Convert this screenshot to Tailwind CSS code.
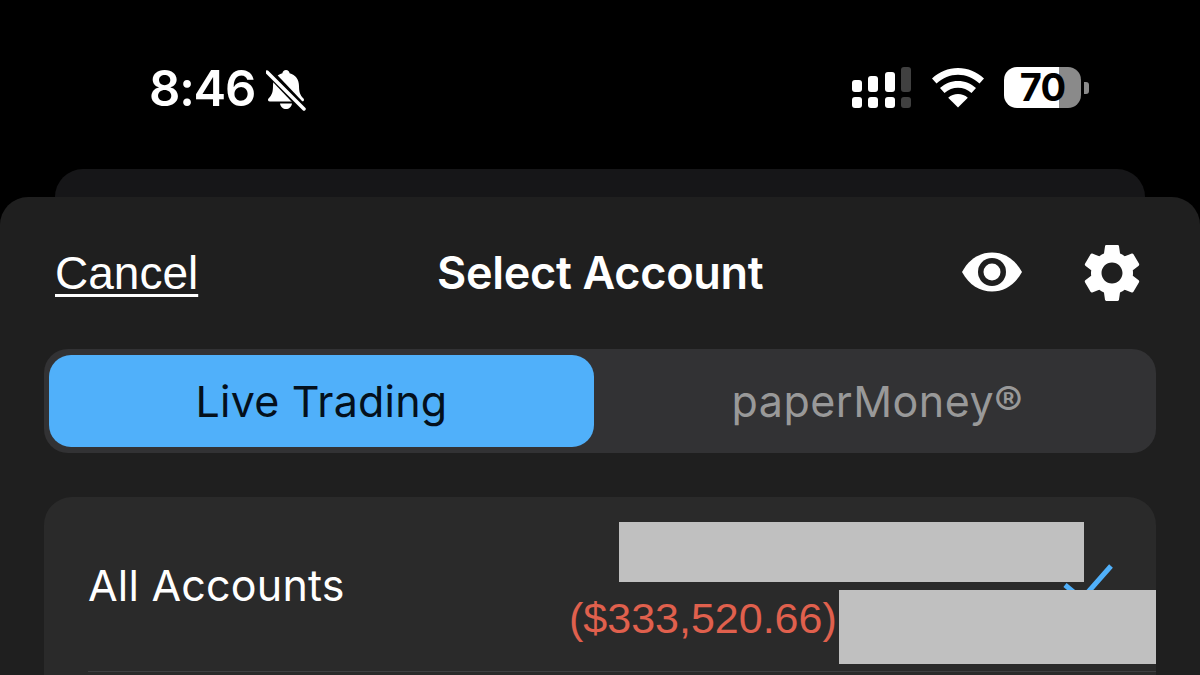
<!DOCTYPE html>
<html>
<head>
<meta charset="utf-8">
<script src="https://cdn.jsdelivr.net/npm/@tailwindcss/browser@4"></script>
</head>
<body class="bg-black">
<div class="w-[1200px] h-[675px] overflow-hidden bg-black flex flex-col font-['Inter','Liberation_Sans',sans-serif]">
  <!-- status bar -->
  <div class="h-[169px] shrink-0 pt-[66px] pl-[149px] pr-[111px] flex items-start justify-between text-white">
    <div class="flex items-start gap-[11px]">
      <span class="text-[49px] leading-[46px] font-semibold tracking-[-1.2px]">8:46</span>
      <svg class="w-[40px] h-[42px] mt-[3px]" viewBox="0 0 40 42">
        <path d="M20 1c2 0 3.400 1.400 3.600 3.200C29.500 5.800 33 10.500 33 17c0 6 1 9 4.500 12.500 1 1 .5 3-1.500 3H4c-2 0-2.600-1.800-1.500-3C6 26 7 23 7 17 7 10.500 10.500 5.800 16.400 4.200 16.600 2.400 18 1 20 1z" fill="#fff"/>
        <path d="M14 34.500h12c-.5 3.500-3 5.500-6 5.500s-5.500-2-6-5.500z" fill="#fff"/>
        <path d="M0 0L40 42" stroke="#000" stroke-width="8"/>
        <path d="M1 3L38 40" stroke="#fff" stroke-width="3.500" stroke-linecap="round"/>
      </svg>
    </div>
    <div class="flex items-start">
      <svg class="w-[60px] h-[42px] mt-[1px]" viewBox="0 0 60 42">
        <g fill="#fff">
          <rect x="1" y="13" width="10" height="12" rx="3"/>
          <rect x="17" y="9" width="10" height="16" rx="3"/>
          <rect x="34" y="5" width="10" height="20" rx="3"/>
          <rect x="1" y="30" width="10" height="11" rx="3"/>
          <rect x="17" y="30" width="10" height="11" rx="3"/>
          <rect x="34" y="30" width="10" height="11" rx="3"/>
        </g>
        <rect x="50" y="0" width="10" height="25" rx="3" fill="#404040"/>
        <rect x="50" y="30" width="10" height="11" rx="3" fill="#404040"/>
      </svg>
      <svg class="w-[52px] h-[40px] ml-[21px] mt-[2px]" viewBox="0 0 52 40">
        <path d="M26 0C16 0 7.500 3.800 0 10.500l4.500 5C11 9.800 18 6.800 26 6.800s15 3 21.500 8.700l4.500-5C44.500 3.800 36 0 26 0z" fill="#fff"/>
        <path d="M26 13c-7 0-12.800 2.500-18 7l4.500 5c4-3.300 8.500-5.200 13.500-5.200s9.500 1.900 13.500 5.200l4.500-5c-5.200-4.500-11-7-18-7z" fill="#fff"/>
        <path d="M26 26c-3.700 0-7 1.300-9.800 3.700L26 39.500l9.800-9.800C33 27.300 29.700 26 26 26z" fill="#fff"/>
      </svg>
      <div class="flex items-center ml-[20px] mt-[1px]">
        <div class="relative w-[77px] h-[41px] rounded-[13px] bg-[linear-gradient(90deg,#fff_0,#fff_71%,#8a8a8a_71%,#8a8a8a_100%)] flex items-center justify-center">
          <span class="text-[38px] leading-[41px] font-bold text-black tracking-[-0.8px] font-['Inter',sans-serif]">70</span>
        </div>
        <div class="w-[5px] h-[12px] ml-[3px] bg-[#8a8a8a] rounded-r-[3px]"></div>
      </div>
    </div>
  </div>

  <!-- card behind the sheet -->
  <div class="h-[28px] shrink-0 mx-[55px] bg-[#161618] rounded-t-[28px]"></div>

  <!-- sheet -->
  <div class="flex-1 bg-[#1f1f1f] rounded-t-[28px] px-[44px]">
    <div class="h-[152px] flex items-center justify-between relative">
      <span class="ml-[11px] text-[46px] leading-[52px] text-white underline decoration-[3px] underline-offset-[5px] font-['Liberation_Sans',sans-serif]">Cancel</span>
      <span class="absolute left-[393px] top-[50px] text-[45px] leading-[52px] font-semibold text-white tracking-[-0.3px]">Select Account</span>
      <div class="flex items-center gap-[62px] mr-[16px]">
        <svg class="w-[60px] h-[40px] mt-[-2px]" viewBox="0 0 60 40">
          <path d="M0 20C7 7 18 0.500 30 0.500S53 7 60 20C53 33 42 39.500 30 39.500S7 33 0 20z" fill="#fff"/>
          <circle cx="30" cy="20" r="14" fill="#1f1f1f"/>
          <circle cx="30" cy="20" r="8.500" fill="#fff"/>
        </svg>
        <svg class="w-[70px] h-[70px] mx-[-7px] mt-[-1px]" viewBox="0 0 24 24">
          <path fill="#fff" d="M19.14 12.94c.04-.3.06-.61.06-.94 0-.32-.02-.64-.07-.94l2.03-1.58c.18-.14.23-.41.12-.61l-1.92-3.32c-.12-.22-.37-.29-.59-.22l-2.39.96c-.5-.38-1.03-.7-1.62-.94l-.36-2.54c-.04-.24-.24-.41-.48-.41h-3.84c-.24 0-.43.17-.47.41l-.36 2.54c-.59.24-1.13.57-1.62.94l-2.39-.96c-.22-.08-.47 0-.59.22L2.74 8.870c-.12.21-.08.47.12.61l2.03 1.58c-.05.3-.09.63-.09.94s.02.64.07.94l-2.03 1.58c-.18.14-.23.41-.12.61l1.92 3.32c.12.22.37.29.59.22l2.39-.96c.5.38 1.03.7 1.62.94l.36 2.54c.05.24.24.41.48.41h3.84c.24 0 .44-.17.47-.41l.36-2.54c.59-.24 1.13-.56 1.62-.94l2.39.96c.22.08.47 0 .59-.22l1.92-3.32c.12-.22.07-.47-.12-.61l-2.01-1.58zM12 15.6c-1.98 0-3.6-1.62-3.6-3.6s1.62-3.6 3.6-3.6 3.6 1.62 3.6 3.6-1.62 3.6-3.6 3.6z"/>
        </svg>
      </div>
    </div>

    <!-- segmented control -->
    <div class="h-[104px] bg-[#323234] rounded-[24px] p-[6px] pl-[5px] flex">
      <div class="w-[545px] h-[92px] bg-[#50b0fa] rounded-[22px] flex items-center justify-center text-[43px] text-[#04101c] tracking-[0.2px]">Live Trading</div>
      <div class="flex-1 flex items-center justify-center pl-[11px] text-[43px] text-[#999999] tracking-[0.5px]">paperMoney®</div>
    </div>

    <!-- account list -->
    <div class="mt-[44px] h-[240px] bg-[#2a2a2a] rounded-[28px] relative overflow-hidden">
      <div class="h-[175px] ml-[44px] flex items-center justify-between border-b border-[#3f3f41]">
        <span class="text-[43px] leading-[50px] text-white tracking-[0.2px] mt-[1px]">All Accounts</span>
      </div>
      <span class="absolute left-[525px] top-[96px] text-[43px] leading-[50px] text-[#e0604d] font-['Liberation_Sans',sans-serif]">($333,520.66)</span>
      <svg class="absolute left-[1018px] top-[66px] w-[52px] h-[40px]" viewBox="0 0 52 40">
        <path d="M3 22L20 36L49 3" fill="none" stroke="#50b0fa" stroke-width="5"/>
      </svg>
      <div class="absolute left-[575px] top-[25px] w-[465px] h-[60px] bg-[#c0c0c0]"></div>
      <div class="absolute left-[795px] top-[93px] w-[317px] h-[74px] bg-[#c0c0c0]"></div>
    </div>
  </div>
</div>
</body>
</html>
